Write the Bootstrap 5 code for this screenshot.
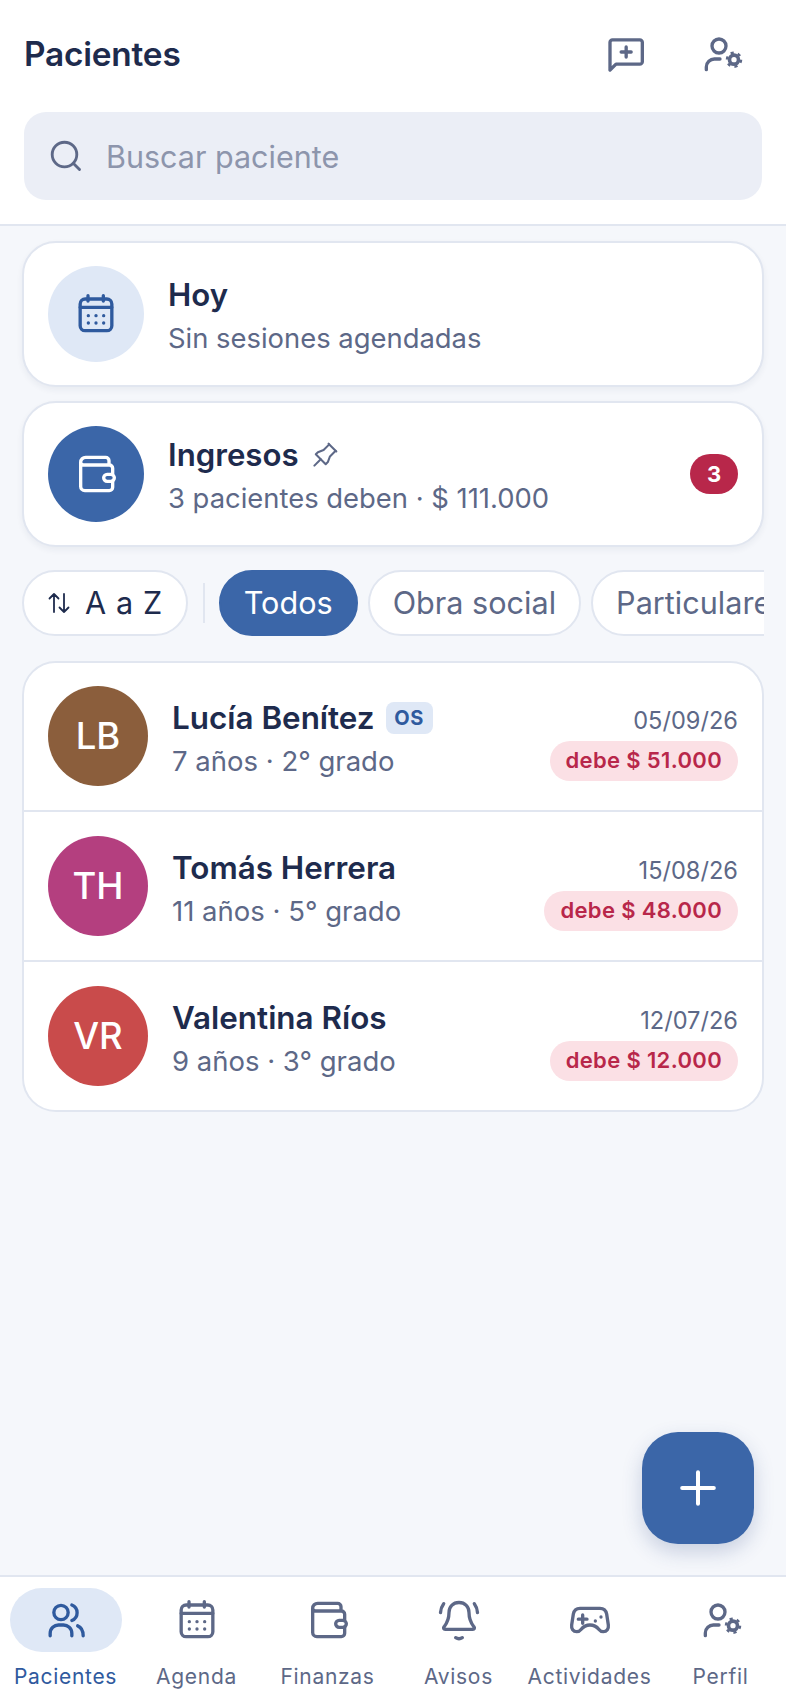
<!DOCTYPE html>
<html lang="es">
<head>
<meta charset="utf-8">
<title>Pacientes</title>
<link href="https://cdn.jsdelivr.net/npm/bootstrap@5.3.0/dist/css/bootstrap.min.css" rel="stylesheet">
<style>
html,body{height:100%;}
body{font-family:Inter,"Liberation Sans",sans-serif;background:#f5f7fb;color:#1e2b4d;}
.app-shell{position:relative;height:1704px;width:786px;overflow:hidden;}
svg.ico{fill:none;stroke:currentColor;stroke-width:2;stroke-linecap:round;stroke-linejoin:round;display:block;overflow:visible;flex-shrink:0;}
svg.pin-ico{stroke-width:1.45;color:#5d6887;margin-left:-5px;}
svg.plus-ico{stroke-width:2.4;}
svg.sort-ico{stroke-width:1.8;}
.top-head{background:#fff;border-bottom:2px solid #e1e6f0;padding:34px 24px 24px;}
.page-title{font-size:33.4px;font-weight:600;line-height:40px;margin:0;letter-spacing:-.2px;}
.head-icons{gap:55px;margin-right:20px;color:#5d6887;}
.search-box{margin-top:38px;height:88px;background:#ebeef6;border-radius:22px;padding:0 24px;gap:22px;color:#5d6887;}
.search-box span{font-size:30.5px;color:#8d95ac;line-height:1;padding-top:2px;}
.content-area{padding:15px 22px 0;}
.sum-card{border:2px solid #e1e6f0;border-radius:34px;background:#fff;padding:23px 24px;margin-bottom:14px;box-shadow:0 3px 6px rgba(30,43,77,.06);gap:24px;}
.round-ico{width:96px;height:96px;border-radius:50%;}
.ico-soft{background:#dfe8f6;color:#2f5a9e;}
.ico-solid{background:#3b66a8;color:#fff;}
.sum-text{padding-top:4px;}
.sum-title{font-size:31.2px;font-weight:600;line-height:38px;gap:14px;}
.sum-sub{font-size:27.4px;line-height:38px;color:#5d6887;margin-top:5px;}
.count-pill{background:#b8274a;color:#fff;font-size:22px;font-weight:700;width:48px;height:40px;border-radius:20px;}
.chips-row{margin-top:23px;gap:10px;overflow:hidden;height:66px;}
.chip-item{height:66px;border:2px solid #e1e6f0;border-radius:33px;background:#fff;color:#5d6887;font-size:30.6px;padding:0 23px;flex-shrink:0;white-space:nowrap;}
.chip-sort{color:#1e2b4d;gap:14px;letter-spacing:.6px;}
.chip-on{background:#3b66a8;border-color:#3b66a8;color:#fff;}
.chip-sep{width:2px;height:40px;background:#e1e6f0;flex-shrink:0;margin:0 4px 0 5px;}
.pat-list{margin-top:25px;border:2px solid #e1e6f0;border-radius:34px;overflow:hidden;background:#fff;}
.pat-row{padding:24px;gap:24px;border:0;border-bottom:2px solid #e1e6f0;color:#1e2b4d;}
.pat-row:first-child{padding-top:23px;}
.pat-row:last-child{border-bottom:0;}
.avatar-disc{width:100px;height:100px;border-radius:50%;color:#fff;font-size:36.5px;font-weight:500;flex-shrink:0;}
.av-a{background:#8b5e3c;}.av-b{background:#b43f7f;}.av-c{background:#c94b4b;}
.pat-main{padding-top:6px;}
.pat-name{font-size:31.4px;font-weight:600;line-height:38px;gap:11px;}
.pat-sub{font-size:27.5px;line-height:38px;color:#5d6887;margin-top:5px;}
.os-tag{background:#dfe8f6;color:#2f5a9e;font-size:20px;font-weight:700;height:32px;width:47px;border-radius:8px;letter-spacing:.5px;}
.pat-side{padding-top:14px;}
.pat-date{font-size:23.6px;color:#5d6887;line-height:30px;}
.debt-pill{background:#fbe0e5;color:#b8274a;font-size:22px;font-weight:600;height:40px;border-radius:20px;padding:0 16px;margin-top:5px;letter-spacing:.35px;}
.fab-btn{position:absolute;right:32px;top:1432px;width:112px;height:112px;border-radius:36px;background:#3b66a8;border:0;color:#fff;box-shadow:0 8px 20px rgba(40,70,130,.22);}
.fab-btn:hover{background:#3b66a8;color:#fff;}
.bottom-nav{position:absolute;left:0;right:0;bottom:0;height:129px;background:#fff;border-top:2px solid #e1e6f0;}
.nav-col{flex:0 0 131px;width:131px;color:#5d6887;padding-top:11px;}
.nav-ic{width:112px;height:64px;border-radius:32px;}
.nav-col.active-tab{color:#2f5a9e;}
.active-tab .nav-ic{background:#dfe8f6;}
.nav-lab{font-size:21px;font-weight:400;line-height:26px;margin-top:12px;letter-spacing:.7px;white-space:nowrap;}
</style>
</head>
<body>
<svg width="0" height="0" class="position-absolute" aria-hidden="true">
  <defs>
    <symbol id="s-cal" viewBox="0 0 24 24"><rect x="2.500" y="3" width="19" height="19" rx="3"/><path d="M7.200 1v3.200M16.400 1v3.200M2.500 8h19"/><g fill="currentColor" stroke="none"><circle cx="7.400" cy="13" r="1"/><circle cx="12" cy="13" r="1"/><circle cx="16.600" cy="13" r="1"/><circle cx="7.400" cy="17.400" r="1"/><circle cx="12" cy="17.400" r="1"/><circle cx="16.600" cy="17.400" r="1"/></g></symbol>
    <symbol id="s-wal" viewBox="0 0 24 24" overflow="visible"><path d="M2.800 5a3 3 0 0 1 3-3h12a2 2 0 0 1 2 2v2.600M2.800 4.800c0 1 .8 1.800 1.800 1.800H20a2 2 0 0 1 2 2V12M2.800 5v14.500A2.500 2.500 0 0 0 5.300 22H20a2 2 0 0 0 2-2v-3.600"/><rect x="16.600" y="12.200" width="6.400" height="4.200" rx="2.100"/></symbol>
    <symbol id="s-usg" viewBox="0 0 24 24" overflow="visible"><circle cx="10.200" cy="7.200" r="4.200"/><path d="M2.600 21.400v-1.600c0-2.800 2.400-4.800 4.800-4.800h3.400"/><circle cx="19.200" cy="15.400" r="2.700" stroke-width="2.200"/><circle cx="19.200" cy="15.400" r="4.200" stroke-width="1.500" stroke-dasharray="1.900 2.500" stroke-linecap="butt"/></symbol>
  </defs>
</svg>
<div class="app-shell d-flex flex-column">
  <header class="top-head">
    <div class="d-flex align-items-center justify-content-between">
      <h1 class="page-title">Pacientes</h1>
      <div class="d-flex head-icons">
        <svg class="ico" width="40" height="40" viewBox="0 0 24 24"><path d="M1.800 21.600V5a1.500 1.500 0 0 1 1.500-1.500h16.400A1.500 1.500 0 0 1 21.200 5v11.600a1.500 1.500 0 0 1-1.500 1.500H5.400z"/><path d="M11.500 7.800v6M8.500 10.800h6"/></svg>
        <svg class="ico" width="40" height="40"><use href="#s-usg"/></svg>
      </div>
    </div>
    <div class="search-box d-flex align-items-center">
      <svg class="ico" width="36" height="36" viewBox="0 0 24 24"><circle cx="11" cy="11" r="8.200" stroke-width="1.900"/><path d="M17 17l4 4" stroke-width="1.900"/></svg>
      <span>Buscar paciente</span>
    </div>
  </header>

  <main class="content-area flex-grow-1">
    <div class="sum-card d-flex align-items-center">
      <div class="round-ico ico-soft d-flex align-items-center justify-content-center flex-shrink-0">
        <svg class="ico" width="40" height="40"><use href="#s-cal"/></svg>
      </div>
      <div class="sum-text">
        <div class="sum-title">Hoy</div>
        <div class="sum-sub">Sin sesiones agendadas</div>
      </div>
    </div>

    <div class="sum-card d-flex align-items-center">
      <div class="round-ico ico-solid d-flex align-items-center justify-content-center flex-shrink-0">
        <svg class="ico" width="40" height="40"><use href="#s-wal"/></svg>
      </div>
      <div class="flex-grow-1 sum-text">
        <div class="sum-title d-flex align-items-center">Ingresos
          <svg class="ico pin-ico" width="34" height="34" viewBox="0 0 24 24"><path d="M15 4.500l-4 4l-4 1.500l-1.500 1.500l7 7l1.500-1.500l1.500-4l4-4"/><path d="M9 15l-4.500 4.500"/><path d="M14.500 4l5.500 5.500"/></svg>
        </div>
        <div class="sum-sub">3 pacientes deben · $ 111.000</div>
      </div>
      <span class="count-pill d-flex align-items-center justify-content-center flex-shrink-0">3</span>
    </div>

    <div class="chips-row d-flex align-items-center">
      <div class="chip-item chip-sort d-flex align-items-center">
        <svg class="ico sort-ico" width="24" height="28" viewBox="0 0 24 24"><path d="M7 21V3M2.500 7.500L7 3l4.500 4.500M17 3v18M12.500 16.500L17 21l4.500-4.500"/></svg>
        <span>A a Z</span>
      </div>
      <div class="chip-sep"></div>
      <div class="chip-item chip-on d-flex align-items-center">Todos</div>
      <div class="chip-item d-flex align-items-center">Obra social</div>
      <div class="chip-item d-flex align-items-center">Particulares</div>
    </div>

    <div class="list-group pat-list">
      <div class="list-group-item pat-row d-flex align-items-center">
        <div class="avatar-disc av-a d-flex align-items-center justify-content-center">LB</div>
        <div class="flex-grow-1 pat-main">
          <div class="pat-name d-flex align-items-center">Lucía Benítez <span class="os-tag d-flex align-items-center justify-content-center">OS</span></div>
          <div class="pat-sub">7 años · 2° grado</div>
        </div>
        <div class="d-flex flex-column align-items-end pat-side">
          <div class="pat-date">05/09/26</div>
          <span class="debt-pill d-flex align-items-center">debe $ 51.000</span>
        </div>
      </div>
      <div class="list-group-item pat-row d-flex align-items-center">
        <div class="avatar-disc av-b d-flex align-items-center justify-content-center">TH</div>
        <div class="flex-grow-1 pat-main">
          <div class="pat-name">Tomás Herrera</div>
          <div class="pat-sub">11 años · 5° grado</div>
        </div>
        <div class="d-flex flex-column align-items-end pat-side">
          <div class="pat-date">15/08/26</div>
          <span class="debt-pill d-flex align-items-center">debe $ 48.000</span>
        </div>
      </div>
      <div class="list-group-item pat-row d-flex align-items-center">
        <div class="avatar-disc av-c d-flex align-items-center justify-content-center">VR</div>
        <div class="flex-grow-1 pat-main">
          <div class="pat-name">Valentina Ríos</div>
          <div class="pat-sub">9 años · 3° grado</div>
        </div>
        <div class="d-flex flex-column align-items-end pat-side">
          <div class="pat-date">12/07/26</div>
          <span class="debt-pill d-flex align-items-center">debe $ 12.000</span>
        </div>
      </div>
    </div>
  </main>

  <button class="btn fab-btn d-flex align-items-center justify-content-center" type="button" aria-label="Nuevo paciente">
    <svg class="ico plus-ico" width="40" height="40" viewBox="0 0 24 24"><path d="M12 2.500v19M2.500 12h19"/></svg>
  </button>

  <nav class="bottom-nav d-flex">
    <div class="nav-col active-tab d-flex flex-column align-items-center">
      <div class="nav-ic d-flex align-items-center justify-content-center">
        <svg class="ico" width="40" height="40" viewBox="0 0 24 24"><circle cx="9" cy="7.500" r="4.300"/><path d="M2.500 21.500v-1.500c0-3 2.500-5 5-5h3c2.500 0 5 2 5 5v1.500M15.500 3a5 5 0 0 1 0 9.300M19 15.500c2 .8 3.300 2.800 3.300 6"/></svg>
      </div>
      <div class="nav-lab">Pacientes</div>
    </div>
    <div class="nav-col d-flex flex-column align-items-center">
      <div class="nav-ic d-flex align-items-center justify-content-center">
        <svg class="ico" width="40" height="40"><use href="#s-cal"/></svg>
      </div>
      <div class="nav-lab">Agenda</div>
    </div>
    <div class="nav-col d-flex flex-column align-items-center">
      <div class="nav-ic d-flex align-items-center justify-content-center">
        <svg class="ico" width="40" height="40"><use href="#s-wal"/></svg>
      </div>
      <div class="nav-lab">Finanzas</div>
    </div>
    <div class="nav-col d-flex flex-column align-items-center">
      <div class="nav-ic d-flex align-items-center justify-content-center">
        <svg class="ico" width="40" height="40" viewBox="0 0 24 24"><path d="M12 1.500c-3.600 0-6 2.600-6 6 0 5-1.600 6.800-3 8.600-.5.700-.2 1.500.7 1.500h16.600c.9 0 1.200-.8.700-1.500-1.400-1.800-3-3.600-3-8.600 0-3.400-2.400-6-6-6z"/><path d="M.9 7.600C1 5.400 1.600 3.800 2.800 2.200M23.100 7.600C23 5.400 22.400 3.800 21.200 2.200M10 22.600c1.200.8 2.800.8 4 0"/></svg>
      </div>
      <div class="nav-lab">Avisos</div>
    </div>
    <div class="nav-col d-flex flex-column align-items-center">
      <div class="nav-ic d-flex align-items-center justify-content-center">
        <svg class="ico" width="40" height="40" viewBox="0 0 24 24"><path d="M6 5h12c2.200 0 3.600 1.400 4 3.400l1 6.600c.3 2.200-.9 4-3 4-1.200 0-2-.5-2.600-1.300-.9-1.100-2.300-2.700-5.400-2.700s-4.500 1.600-5.400 2.700C6 18.500 5.200 19 4 19c-2.100 0-3.300-1.800-3-4l1-6.600C2.400 6.400 3.800 5 6 5z"/><path d="M7.600 9v5M5 11.500h5.200"/><g fill="currentColor" stroke="none"><circle cx="15.200" cy="12.600" r="1"/><circle cx="18.600" cy="10.200" r="1"/></g></svg>
      </div>
      <div class="nav-lab">Actividades</div>
    </div>
    <div class="nav-col d-flex flex-column align-items-center">
      <div class="nav-ic d-flex align-items-center justify-content-center">
        <svg class="ico" width="40" height="40"><use href="#s-usg"/></svg>
      </div>
      <div class="nav-lab">Perfil</div>
    </div>
  </nav>
</div>
<script src="https://cdn.jsdelivr.net/npm/bootstrap@5.3.0/dist/js/bootstrap.bundle.min.js"></script>
</body>
</html>
